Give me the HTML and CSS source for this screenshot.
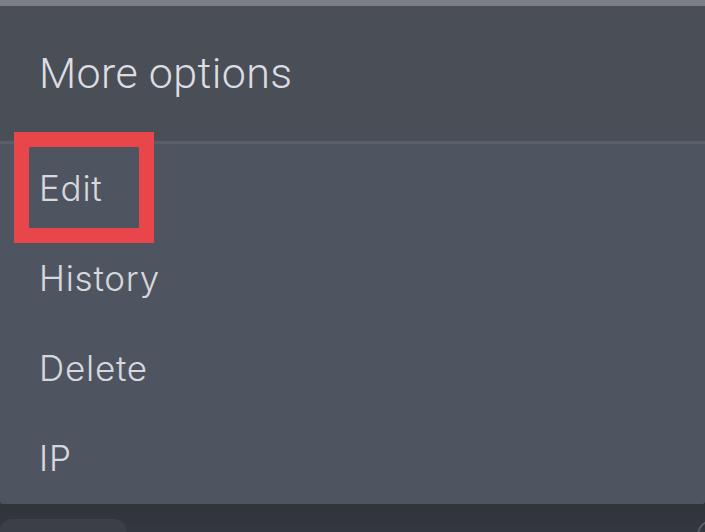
FILE: index.html
```html
<!DOCTYPE html>
<html>
<head>
<meta charset="utf-8">
<link rel="stylesheet" href="styles.css">
</head>
<body>
<div class="top-strip"></div>
<div class="sheet">
  <div class="sheet-header">More options</div>
  <ul class="menu">
    <li class="menu-item highlighted">Edit<span class="annotation"></span></li>
    <li class="menu-item">History</li>
    <li class="menu-item">Delete</li>
    <li class="menu-item">IP</li>
  </ul>
</div>
<div class="below">
  <div class="pill"></div>
  <div class="ring"></div>
</div>
</body>
</html>
```
FILE: styles.css
```css
html, body {
  margin: 0;
  padding: 0;
}
body {
  width: 705px;
  height: 532px;
  overflow: hidden;
  background: #32363c;
  font-family: Inter, "Noto Sans", sans-serif;
}
.top-strip {
  height: 6px;
  background: #7b7e85;
}
.sheet {
  background: #4f5560;
  border-bottom-left-radius: 3px;
  border-bottom-right-radius: 3px;
}
.sheet-header {
  height: 135px;
  line-height: 135px;
  padding-left: 39px;
  background: #4a4f57;
  border-bottom: 3px solid #5a5f6a;
  font-family: Roboto, "Liberation Sans", sans-serif;
  font-weight: 300;
  font-size: 43px;
  color: #dcdde2;
  letter-spacing: 0.35px;
}
.menu {
  list-style: none;
  margin: 0;
  padding: 0;
}
.menu-item {
  position: relative;
  height: 90px;
  line-height: 88px;
  padding-left: 39px;
  font-size: 35px;
  font-weight: 350;
  color: #d6d8dd;
  letter-spacing: 0.75px;
}
.annotation {
  position: absolute;
  left: 14px;
  top: -12px;
  width: 110px;
  height: 81px;
  border: 15px solid #e8464b;
}
.below {
  display: flex;
  justify-content: space-between;
  align-items: flex-start;
  height: 28px;
  padding-top: 15px;
  background: linear-gradient(#30343a, #363a41);
}
.pill {
  width: 126px;
  height: 30px;
  border-radius: 12px;
  background: #3b3f46;
}
.ring {
  width: 30px;
  height: 30px;
  margin-right: -22px;
  margin-top: 1px;
  border-radius: 50%;
  border: 2px solid #5b5f66;
  box-sizing: border-box;
}
```
